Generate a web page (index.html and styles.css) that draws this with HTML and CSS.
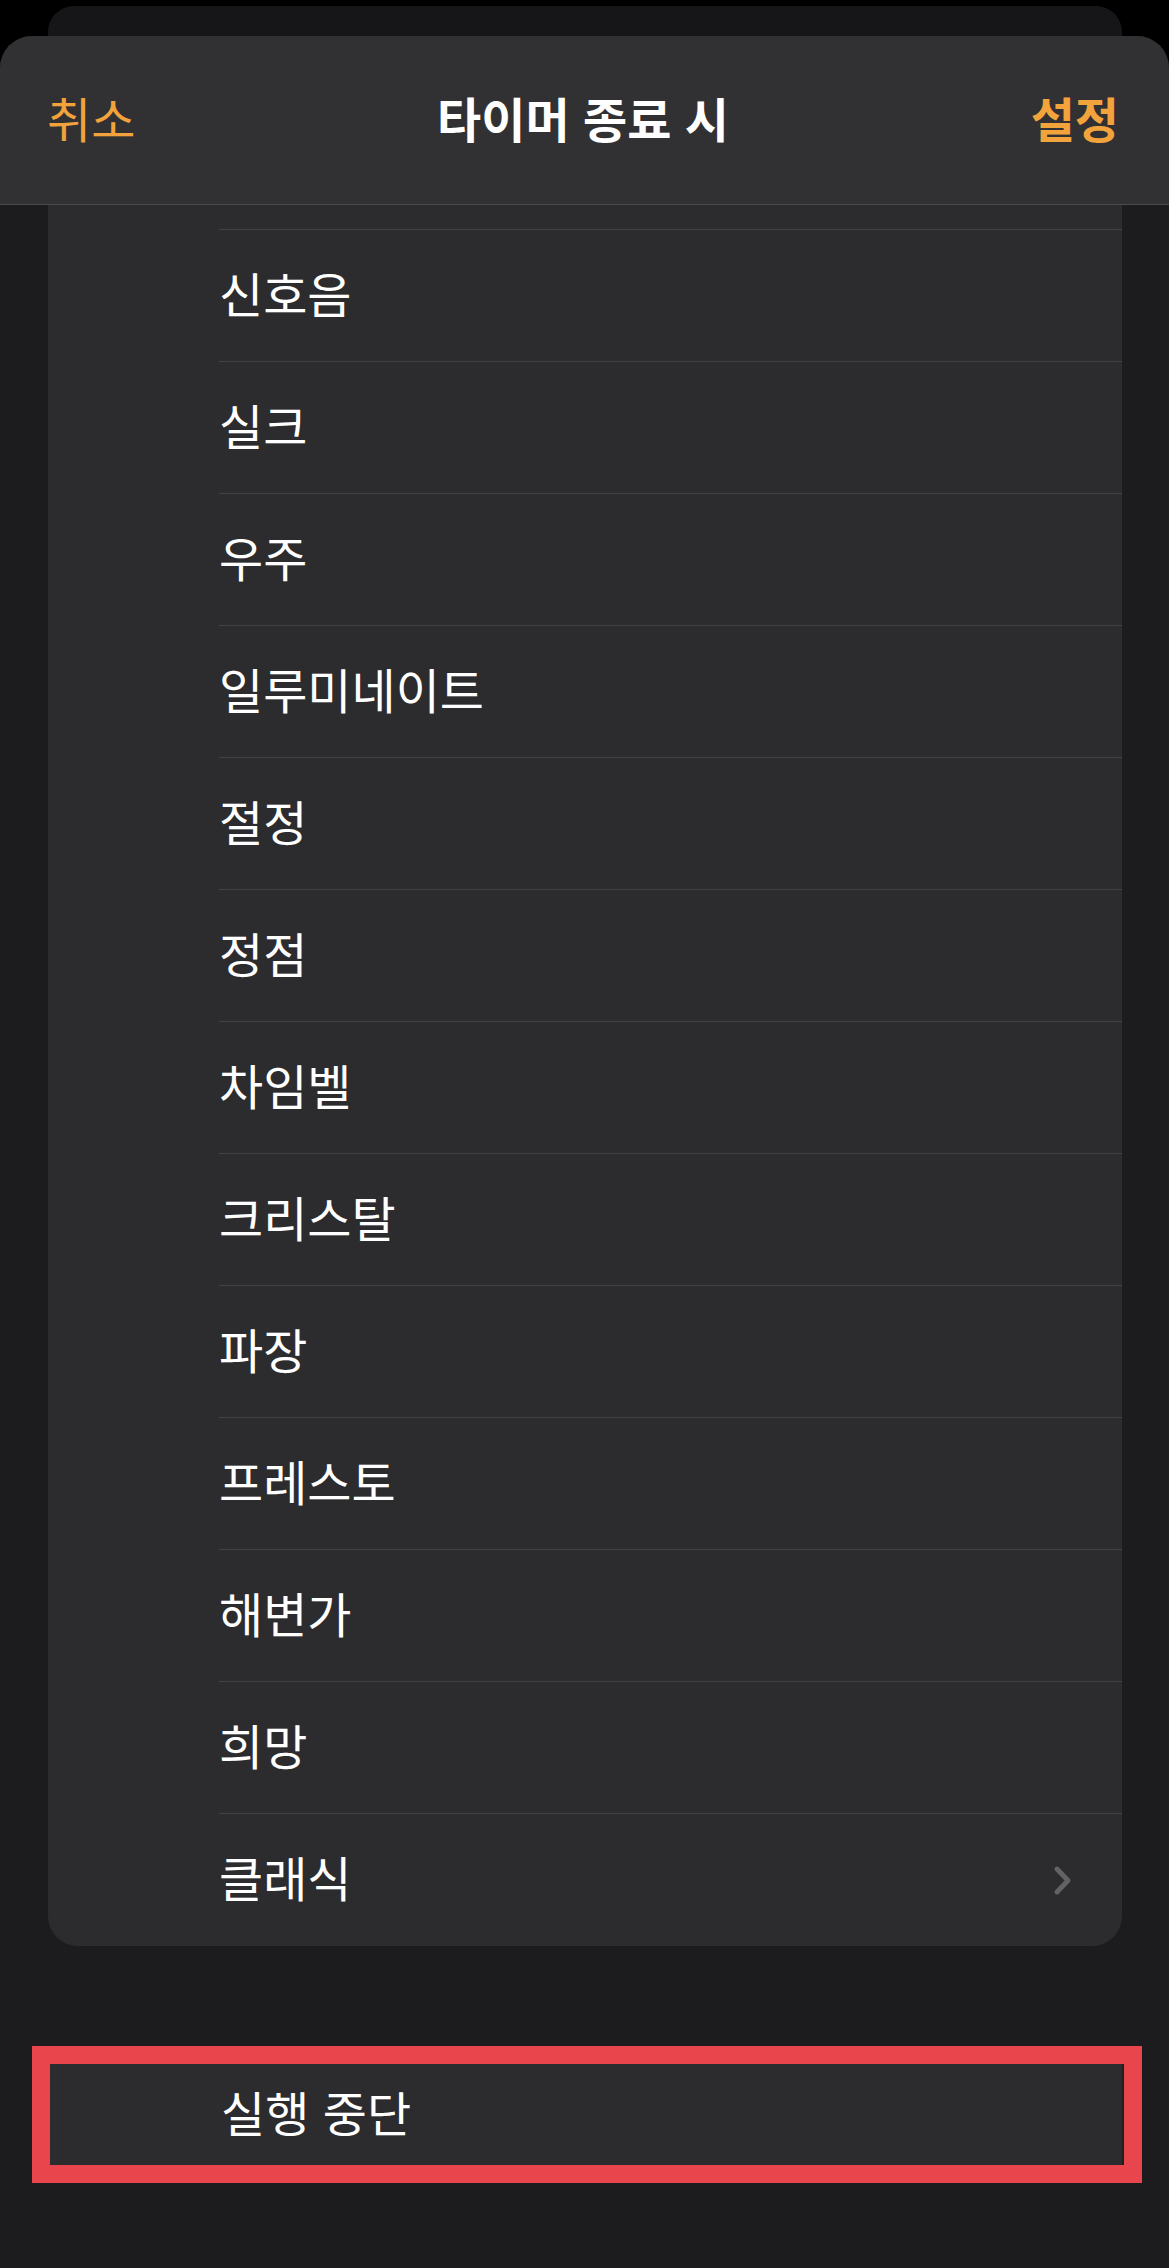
FILE: index.html
```html
<!DOCTYPE html>
<html lang="ko">
<head>
<meta charset="utf-8">
<title>타이머 종료 시</title>
<link rel="stylesheet" href="styles.css">
</head>
<body>
<div class="page">
  <div class="top">
    <div class="back-card"></div>
  </div>
  <div class="sheet">
    <header class="nav">
      <span class="nav-btn cancel">취소</span>
      <span class="nav-title">타이머 종료 시</span>
      <span class="nav-btn done">설정</span>
    </header>
    <div class="list">
      <div class="row partial"></div>
      <div class="row"><span class="label">신호음</span></div>
      <div class="row"><span class="label">실크</span></div>
      <div class="row"><span class="label">우주</span></div>
      <div class="row"><span class="label">일루미네이트</span></div>
      <div class="row"><span class="label">절정</span></div>
      <div class="row"><span class="label">정점</span></div>
      <div class="row"><span class="label">차임벨</span></div>
      <div class="row"><span class="label">크리스탈</span></div>
      <div class="row"><span class="label">파장</span></div>
      <div class="row"><span class="label">프레스토</span></div>
      <div class="row"><span class="label">해변가</span></div>
      <div class="row"><span class="label">희망</span></div>
      <div class="row last">
        <span class="label">클래식</span>
        <svg class="chevron" width="17" height="29" viewBox="0 0 17 29" aria-hidden="true">
          <path d="M3 3 L14 14.5 L3 26" fill="none" stroke="#636367" stroke-width="4.8" stroke-linecap="round" stroke-linejoin="round"/>
        </svg>
      </div>
    </div>
    <div class="stop-highlight">
      <div class="stop-row"><span class="label">실행 중단</span></div>
    </div>
  </div>
</div>
</body>
</html>
```
FILE: styles.css
```css
html, body {
  margin: 0;
  padding: 0;
  background: #000;
}
body {
  width: 1169px;
  height: 2268px;
  overflow: hidden;
  font-family: "Noto Sans CJK KR", "Noto Sans", sans-serif;
  color: #fff;
}
.page {
  width: 1169px;
  height: 2268px;
  display: flex;
  flex-direction: column;
}
.top {
  height: 36px;
  padding-top: 6px;
  box-sizing: border-box;
  display: flex;
  justify-content: flex-start;
}
.back-card {
  margin-left: 48px;
  width: 1074px;
  height: 40px;
  background: #161618;
  border-radius: 26px 26px 0 0;
}
.sheet {
  flex: 1;
  background: #1c1c1e;
  border-radius: 32px 32px 0 0;
  overflow: hidden;
  display: flex;
  flex-direction: column;
}
.nav {
  height: 168px;
  background: #313133;
  border-bottom: 1px solid #4a4a4c;
  display: flex;
  align-items: center;
  justify-content: space-between;
  padding: 0 50px 0 47px;
  flex-shrink: 0;
}
.nav-btn {
  font-size: 48px;
  color: #f2a33c;
  letter-spacing: 0;
  line-height: 1;
  position: relative;
  top: -3px;
}
.done {
  font-weight: 600;
}
.nav-title {
  font-size: 48px;
  font-weight: 600;
  letter-spacing: 0;
  line-height: 1;
  position: relative;
  left: 0;
  top: -3px;
}
.list {
  margin: 0 47px 0 48px;
  background: #2c2c2e;
  border-radius: 0 0 30px 30px;
  display: flex;
  flex-direction: column;
  flex-shrink: 0;
}
.row {
  height: 132px;
  margin-left: 171px;
  border-top: 1px solid #414144;
  box-sizing: border-box;
  display: flex;
  align-items: center;
  justify-content: space-between;
  padding-right: 51px;
}
.row.partial {
  height: 24px;
  border-top: none;
}
.row.last {
  height: 133px;
}
.label {
  font-size: 48px;
  letter-spacing: 0;
  line-height: 1.2;
  position: relative;
  top: -3px;
}
.chevron {
  display: block;
}
.stop-highlight {
  margin: 100px 0 0 32px;
  width: 1110px;
  height: 137px;
  box-sizing: border-box;
  border: 18px solid #e8464c;
  flex-shrink: 0;
}
.stop-row {
  height: 100%;
  background: #2c2c2e;
  display: flex;
  align-items: center;
  padding-left: 171px;
  box-shadow: inset -2px 0 0 #1f1f21;
}
```
